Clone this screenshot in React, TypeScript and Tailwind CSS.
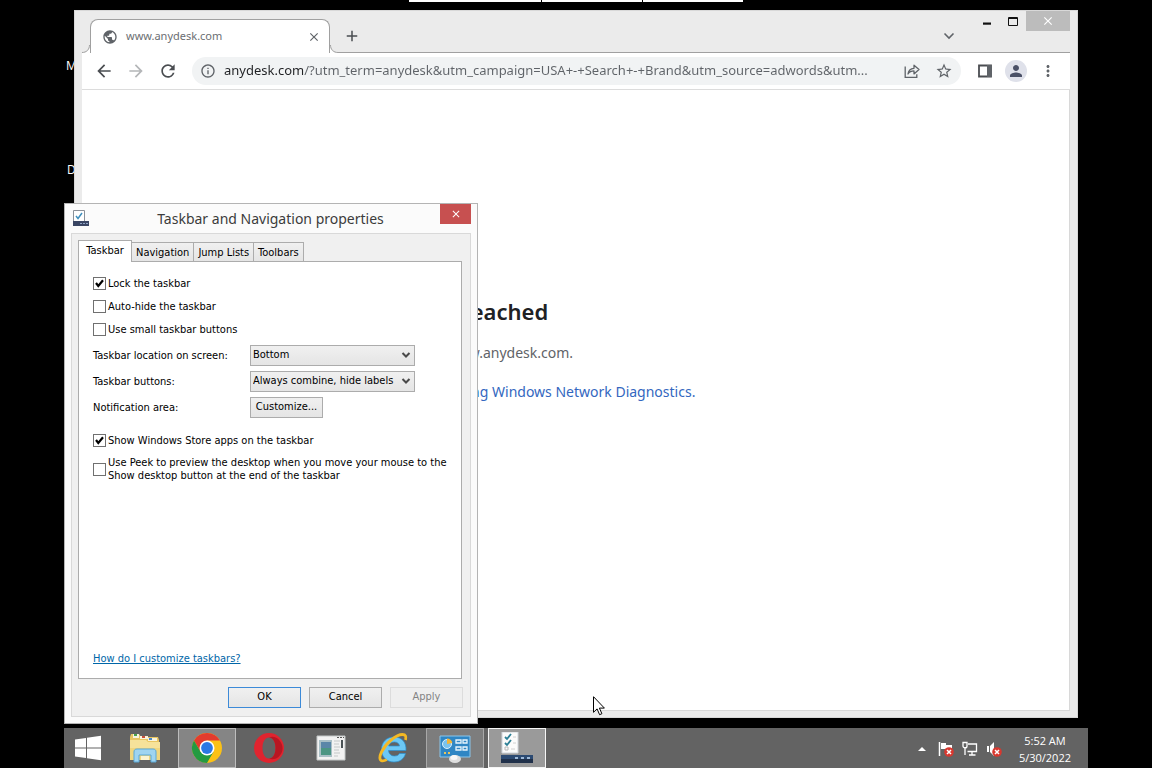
import { useState } from 'react';
import type { ReactNode } from 'react';
import {
  MdAdd,
  MdArrowBack,
  MdArrowForward,
  MdClose,
  MdInfoOutline,
  MdMoreVert,
  MdPerson,
  MdPublic,
  MdRefresh,
  MdStarBorder,
} from 'react-icons/md';

const tabs = ['Taskbar', 'Navigation', 'Jump Lists', 'Toolbars'];

const pageUrl =
  'anydesk.com/?utm_term=anydesk&utm_campaign=USA+-+Search+-+Brand&utm_source=adwords&utm...';

const ShareIcon = () => (
  <svg className="w-4 h-4" viewBox="0 0 16 16" fill="none" stroke="#5f6368" strokeWidth="1.3">
    <path d="M1.200 3.500v10.800h11.600v-3" />
    <path d="M4 11c.4-3.600 2.400-5.500 6-5.700V2.200L15 6.600l-5 4.300V7.900C7.400 7.900 5.400 8.800 4 11z" strokeLinejoin="round" />
  </svg>
);

const SidePanelIcon = () => (
  <svg className="w-4 h-4" viewBox="0 0 16 16">
    <path d="M2 2.500h12v11H2z" fill="none" stroke="#4a4d51" strokeWidth="1.800" />
    <path d="M10 2h5v12h-5z" fill="#5f6368" />
  </svg>
);

const SelectArrow = () => (
  <svg className="pointer-events-none absolute right-1 top-1.5 w-2.5 h-2" viewBox="0 0 10 8" fill="none" stroke="#4a4a4a" strokeWidth="2">
    <path d="M1.500 2L5 5.500 8.500 2" />
  </svg>
);

const StartIcon = () => (
  <svg className="w-7 h-7" viewBox="0 0 28 28" fill="#fff">
    <path d="M1 5.500l11-1.600v9.600H1zM13 3.700L27 1.700v11.800H13zM1 14.500h11v9.600L1 22.500zM13 14.500h14v11.800l-14-2z" />
  </svg>
);

const ExplorerIcon = () => (
  <svg className="w-8 h-8" viewBox="0 0 32 32">
    <path d="M1 5l1-3h8l2 3h17l1 3v19H1z" fill="#e9c662" />
    <path d="M4 2h6v4H4z" fill="#f8f4df" />
    <path d="M5 2h3v2H5z" fill="#4ba04b" />
    <path d="M11 4h8v3h-8z" fill="#f8f4df" />
    <path d="M13 4h3v2h-3z" fill="#c8503c" />
    <path d="M19 6h9v3h-9z" fill="#f8f4df" />
    <path d="M20 6h3v2h-3z" fill="#4b87c8" />
    <path d="M1 8h16l2 2h12v18H1z" fill="#f6e29a" />
    <path d="M1 16h30v12H1z" fill="#f0d67e" />
    <path d="M5 30V20c0-2 1-3 3-3h16c2 0 3 1 3 3v10h-5v-7H10v7z" fill="#9fd4f0" stroke="#5aa9d8" />
    <path d="M12 24h8v4h-8z" fill="#fbf3cf" />
  </svg>
);

const ChromeIcon = () => (
  <svg className="w-8 h-8" viewBox="0 0 32 32">
    <circle cx="16" cy="16" r="15" fill="#fbc116" />
    <path d="M3 8.500A15 15 0 0 1 29 8.500H16l-6.500 11.300z" fill="#e33b2e" />
    <path d="M3 8.500A15 15 0 0 0 16 31l6.500-11.200h-13z" fill="#249a41" />
    <circle cx="16" cy="16" r="7.500" fill="#fff" />
    <circle cx="16" cy="16" r="5.900" fill="#2b78e4" />
  </svg>
);

const OperaIcon = () => (
  <svg className="w-8 h-8" viewBox="0 0 32 32" fillRule="evenodd">
    <path d="M16 1a15 15 0 1 0 0 30 15 15 0 0 0 0-30zm0 4.500c4 0 6.500 4.500 6.500 10.500S20 26.500 16 26.500 9.500 22 9.500 16 12 5.500 16 5.500z" fill="#e0242f" />
    <path d="M22.500 16c0-6-2.500-10.500-6.500-10.500 3-1.500 7-1 9.500 1.800C31 13 31 20 25.500 25c-3 2.500-7 2.800-9.500 1.500 4 0 6.500-4.500 6.500-10.500z" fill="#b81622" />
  </svg>
);

const ServerManagerIcon = () => (
  <svg className="w-8 h-8" viewBox="0 0 32 32">
    <path d="M2 4h28v24H2z" fill="#f2f2f2" stroke="#c4c8c8" />
    <path d="M22 5h2v1h-2zM25 5h2v1h-2zM28 5h1v1h-1z" fill="#555" />
    <path d="M4 8h13v17H4z" fill="#a9bfc6" />
    <path d="M6 10h10v13H6z" fill="#4b9583" />
    <path d="M6 10h10v6H6z" fill="#5a86a8" />
    <path d="M19 9h6M19 12h5M19 15h6M19 18h5M19 21h6M19 24h4" stroke="#c4c8c8" />
    <path d="M26 8h2v8h-2z" fill="#4a5255" />
  </svg>
);

const InternetExplorerIcon = () => (
  <svg className="w-8 h-8" viewBox="0 0 32 32">
    <path d="M29 18.500H11.500c.3 3.500 2.600 5.500 6 5.500 2.400 0 4-.8 5-2.500H28.500C27 27 23 30 17 30 9.500 30 4.500 25 4.500 17.500S9.500 5 17 5c8 0 12.500 5.500 12 13.500zM11.700 14h10.800c-.4-2.600-2.300-4-5.200-4-3 0-5 1.400-5.600 4z" fill="#6cc8f5" stroke="#2a8fd0" strokeWidth=".7" />
    <path d="M28.500 8c1-3.500 0-5.500-3-5.500C19 2.500 9 11 4.500 20c-2.300 4.700-2.200 8.300.5 8.800 1.500.3 3-.2 4.800-1.200" fill="none" stroke="#f4b924" strokeWidth="2.800" />
  </svg>
);

const ControlPanelIcon = () => (
  <svg className="w-8 h-8" viewBox="0 0 32 32">
    <path d="M1 4h30v21H1z" fill="#2f86c4" stroke="#8cc6ea" />
    <circle cx="8" cy="12" r="4.500" fill="#79c3ee" stroke="#d9effb" />
    <path d="M8 12V6.500a5.500 5.500 0 0 1 5.300 4.500z" fill="#f1b53a" />
    <path d="M17 8h5v3h-5zM24 8h4v3h-4zM17 15h5v3h-5zM24 15h4v3h-4z" fill="none" stroke="#e6f4fc" strokeWidth="1.300" />
    <path d="M5 20h2v2H5zM9 20h2v2H9z" fill="#e8c45c" />
    <ellipse cx="16" cy="27" rx="6" ry="4" fill="#dedede" />
    <ellipse cx="15" cy="25.500" rx="3.500" ry="2.500" fill="#f7f7f7" />
  </svg>
);

const TaskbarPropsIcon = () => (
  <svg className="w-8 h-8" viewBox="0 0 32 32">
    <path d="M1 0h16v21H1z" fill="#fbfbfb" stroke="#cfd4da" />
    <path d="M4 5l2 2 4-5M4 11l2 2 4-5" fill="none" stroke="#2b7f96" strokeWidth="1.800" />
    <path d="M4 15h3v3H4z" fill="none" stroke="#b8b8b8" />
    <path d="M12 5h3M12 11h3M10 17h4" stroke="#d0d0d0" />
    <path d="M0 23h32v8H0z" fill="#2c4a72" />
    <path d="M0 27h32v4H0z" fill="#20304a" />
    <path d="M14 25h3v2h-3zM20 25h3v2h-3zM26 25h3v2h-3z" fill="#9db9d8" />
  </svg>
);

const DialogIcon = () => (
  <svg className="w-4 h-4" viewBox="0 0 16 16">
    <path d="M.5.5h11v11H.5z" fill="#fff" stroke="#8b9199" />
    <path d="M3 6l2 2.500L9 3" fill="none" stroke="#3f8fbd" strokeWidth="1.500" />
    <path d="M0 11h16v5H0z" fill="#3a4664" />
    <path d="M7 13h2v1H7zM10 13h2v1h-2zM13 13h2v1h-2z" fill="#8ea3c4" />
  </svg>
);

const ErrorBadge = () => (
  <>
    <circle cx="11" cy="11" r="4.800" fill="#d8382f" />
    <path d="M9 9l4 4M13 9l-4 4" stroke="#fff" strokeWidth="1.500" />
  </>
);

const taskButtons: { name: string; icon: ReactNode; state?: string }[] = [
  { name: 'File Explorer', icon: <ExplorerIcon /> },
  { name: 'Google Chrome', icon: <ChromeIcon />, state: 'border-[#bdbdbd] bg-[#858585]' },
  { name: 'Opera', icon: <OperaIcon /> },
  { name: 'Server Manager', icon: <ServerManagerIcon /> },
  { name: 'Internet Explorer', icon: <InternetExplorerIcon /> },
  { name: 'Control Panel', icon: <ControlPanelIcon />, state: 'border-[#a8a8a8] bg-[#7d7d7d]' },
  { name: 'Taskbar properties', icon: <TaskbarPropsIcon />, state: 'border-[#f5f5f5] bg-[#9a9a9a]' },
];

const CheckRow = ({ id, label, initial = false }: { id: string; label: ReactNode; initial?: boolean }) => {
  const [checked, setChecked] = useState(initial);

  return (
    <div className="flex items-center gap-0.5">
      <span className="relative flex h-[13px] w-[13px] shrink-0">
        <input
          id={id}
          type="checkbox"
          checked={checked}
          onChange={(e) => setChecked(e.target.checked)}
          className="h-full w-full appearance-none border border-[#707070] bg-white"
        />
        {checked && (
          <svg className="pointer-events-none absolute inset-0" viewBox="0 0 13 13" fill="none" stroke="#000" strokeWidth="2.200">
            <path d="M3 6l2.300 3L10 3.300" />
          </svg>
        )}
      </span>
      <label htmlFor={id}>{label}</label>
    </div>
  );
};

const SelectRow = ({ id, label, options }: { id: string; label: string; options: string[] }) => (
  <div className="flex items-center">
    <label htmlFor={id} className="w-[157px] pt-0.5">{label}</label>
    <span className="relative">
      <select
        id={id}
        className="block h-[21px] w-[165px] appearance-none border border-[#acacac] bg-linear-to-b from-[#f0f0f0] to-[#e5e5e5] pl-0.5"
      >
        {options.map((option) => (
          <option key={option}>{option}</option>
        ))}
      </select>
      <SelectArrow />
    </span>
  </div>
);

const BrowserWindow = () => (
  <section className="absolute inset-x-[74px] top-2.5 bottom-[50px] flex flex-col border border-[#d8d8d8] bg-[#ebebeb] px-[7px] pb-1.5 font-['Noto_Sans',sans-serif]">
    {/* Tab strip */}
    <div className="flex h-[42px] shrink-0 items-end">
      <svg className="w-2 h-2" viewBox="0 0 8 8">
        <path d="M0 8c5 0 8-3 8-8v8z" fill="#fff" />
        <path d="M0 7.500c4.500 0 7.500-3 7.500-7.500" fill="none" stroke="#a0a0a0" />
      </svg>
      <div className="flex h-[34px] w-60 items-center rounded-t-lg border border-b-0 border-[#a0a0a0] bg-white px-[11px] pr-1.5 text-[11px] text-[#6b6e72]">
        <MdPublic className="w-4 h-4 text-[#5f6368]" />
        <span className="ml-2 flex-1">www.anydesk.com</span>
        <button aria-label="Close tab" className="p-0.5 text-[#5f6368]">
          <MdClose className="w-3.5 h-3.5" />
        </button>
      </div>
      <svg className="w-2 h-2" viewBox="0 0 8 8">
        <path d="M8 8C3 8 0 5 0 0v8z" fill="#fff" />
        <path d="M8 7.500C3.500 7.500.5 4.500.5 0" fill="none" stroke="#a0a0a0" />
      </svg>
      <div className="flex h-full flex-1 justify-between border-b border-[#a0a0a0]">
        <button aria-label="New tab" className="self-end px-[5px] py-[7px] text-[#4a4d51]">
          <MdAdd className="w-[18px] h-[18px]" />
        </button>
        <div className="flex items-start">
          <button aria-label="Search tabs" className="mt-[19px] mr-[17px] p-0.5">
            <svg className="w-3 h-2" viewBox="0 0 12 8" fill="none" stroke="#5f6368" strokeWidth="1.600">
              <path d="M1.500 1.500L6 6l4.500-4.500" />
            </svg>
          </button>
          <button aria-label="Minimize" className="h-5 px-2">
            <svg className="w-2.5 h-2.5" viewBox="0 0 10 10">
              <path d="M1 6.500h8v2.200H1z" fill="#111" />
            </svg>
          </button>
          <button aria-label="Maximize" className="h-5 px-2">
            <svg className="w-2.5 h-2.5" viewBox="0 0 10 10" fill="none" stroke="#111">
              <path d="M.5 1.500h9v8h-9zM.5 2.500h9" />
            </svg>
          </button>
          <button aria-label="Close" className="flex h-5 w-11 items-center justify-center bg-[#bcbcbc] text-white">
            <MdClose className="w-3.5 h-3.5" />
          </button>
        </div>
      </div>
    </div>

    {/* Toolbar */}
    <div className="flex h-[37px] shrink-0 items-center border-b border-[#dcdcdc] bg-white pr-[13px] pl-3 text-[#5f6368]">
      <div className="flex w-[98px] items-center gap-3">
        <button aria-label="Back"><MdArrowBack className="w-5 h-5 text-[#4a4d51]" /></button>
        <button aria-label="Forward"><MdArrowForward className="w-5 h-5 text-[#b4b6b8]" /></button>
        <button aria-label="Reload"><MdRefresh className="w-5 h-5 text-[#4a4d51]" /></button>
      </div>
      <div className="flex h-7 flex-1 items-center rounded-full bg-[#f1f3f4] px-2">
        <MdInfoOutline className="w-4 h-4 shrink-0" />
        <input
          aria-label="Address"
          defaultValue={pageUrl}
          className="ml-2 min-w-0 flex-1 bg-[linear-gradient(to_right,#202124_79px,#5f6368_79px)] bg-clip-text text-[13px] text-transparent outline-none"
        />
        <button aria-label="Share" className="ml-2"><ShareIcon /></button>
        <button aria-label="Bookmark" className="ml-[15px]"><MdStarBorder className="w-[18px] h-[18px]" /></button>
      </div>
      <div className="ml-4 flex items-center gap-2.5">
        <button aria-label="Side panel"><SidePanelIcon /></button>
        <button aria-label="Profile" className="ml-0.5 flex h-[22px] w-[22px] items-center justify-center rounded-full bg-[#dfe1ea]">
          <MdPerson className="w-[18px] h-[18px] text-[#4a5066]" />
        </button>
        <button aria-label="Menu" className="ml-0.5"><MdMoreVert className="w-[18px] h-[18px]" /></button>
      </div>
    </div>

    {/* Error page */}
    <main className="flex-1 border-b border-r border-[#d8d8d8] bg-white pt-[203px]">
      <div className="mx-auto w-[594px] text-[#5f6368]">
        <h1 className="text-[22px] leading-9 font-semibold text-[#202124]">This site can’t be reached</h1>
        <p className="mt-3.5 text-sm leading-5">Check if there is a typo in www.anydesk.com.</p>
        <p className="mt-[19px] text-sm leading-5">
          If spelling is correct, <a href="#diagnostics" className="text-[#3367c0]">try running Windows Network Diagnostics.</a>
        </p>
      </div>
    </main>
  </section>
);

const PropertiesDialog = () => (
  <section className="absolute left-16 top-[203px] w-[414px] border border-[#b4b4b4] bg-[#fbfbfb] px-1.5 pb-1.5 font-['DejaVu_Sans_Condensed','DejaVu_Sans',sans-serif] text-[11px] text-black">
    <header className="flex h-[29px] items-start justify-between">
      <span className="mt-1.5 ml-0.5 w-7"><DialogIcon /></span>
      <h2 className="pt-[5px] font-['Noto_Sans',sans-serif] text-sm leading-5 text-[#3c3c3c]">Taskbar and Navigation properties</h2>
      <button aria-label="Close" className="flex h-5 w-[31px] items-center justify-center bg-[#c75050] text-white">
        <MdClose className="w-3 h-3" />
      </button>
    </header>

    <div className="border border-[#d9d9d9] bg-[#f0f0f0] pt-1.5 pr-[7px] pb-2 pl-1.5">
      {/* Tabs */}
      <div role="tablist" className="flex items-end">
        {tabs.map((tab) => (
          <button
            key={tab}
            role="tab"
            aria-selected={tab === 'Taskbar'}
            className={
              tab === 'Taskbar'
                ? 'relative -mb-px h-[22px] w-[54px] border border-b-0 border-[#acacac] bg-white'
                : 'h-[19px] border border-b-0 border-l-0 border-[#acacac] bg-linear-to-b from-[#f0f0f0] to-[#e5e5e5] px-1 pt-0.5'
            }
          >
            {tab}
          </button>
        ))}
      </div>

      <div role="tabpanel" className="flex h-[418px] w-96 flex-col border border-[#acacac] bg-white px-3.5 pt-[15px] pb-[13px]">
        <div className="flex flex-col gap-2.5 leading-[13px]">
          <CheckRow id="lock" label="Lock the taskbar" initial />
          <CheckRow id="autohide" label="Auto-hide the taskbar" />
          <CheckRow id="small" label="Use small taskbar buttons" />
        </div>
        <div className="mt-[9px] flex flex-col gap-[5px]">
          <SelectRow id="location" label="Taskbar location on screen:" options={['Bottom', 'Left', 'Right', 'Top']} />
          <SelectRow id="buttons" label="Taskbar buttons:" options={['Always combine, hide labels', 'Never combine']} />
          <div className="flex items-center">
            <label htmlFor="customize" className="w-[157px] pt-0.5">Notification area:</label>
            <button id="customize" className="h-[21px] w-[73px] border border-[#acacac] bg-linear-to-b from-[#f0f0f0] to-[#e5e5e5]">
              Customize...
            </button>
          </div>
        </div>
        <div className="mt-4 flex flex-col gap-[9px] leading-[13px]">
          <CheckRow id="store" label="Show Windows Store apps on the taskbar" initial />
          <CheckRow
            id="peek"
            label={
              <>
                Use Peek to preview the desktop when you move your mouse to the
                <br />
                Show desktop button at the end of the taskbar
              </>
            }
          />
        </div>
        <a href="#help" className="mt-auto self-start leading-[13px] text-[#0066a8] underline">How do I customize taskbars?</a>
      </div>

      <div className="mt-2 flex justify-end gap-2">
        <button className="h-[21px] w-[73px] border border-[#3c8ad8] bg-linear-to-b from-[#f0f0f0] to-[#e5e5e5]">OK</button>
        <button className="h-[21px] w-[73px] border border-[#acacac] bg-linear-to-b from-[#f0f0f0] to-[#e5e5e5]">Cancel</button>
        <button disabled className="h-[21px] w-[73px] border border-[#dcdcdc] bg-[#efefef] text-[#838383]">Apply</button>
      </div>
    </div>
  </section>
);

const Taskbar = () => (
  <footer className="absolute inset-x-16 bottom-0 flex h-10 justify-between bg-[#636363] font-['Open_Sans',sans-serif]">
    <div className="flex gap-1">
      <button aria-label="Start" className="flex w-12 items-center justify-center"><StartIcon /></button>
      {taskButtons.map((item) => (
        <button
          key={item.name}
          aria-label={item.name}
          className={`flex w-[58px] items-center justify-center border ${item.state ?? 'border-transparent'}`}
        >
          {item.icon}
        </button>
      ))}
    </div>
    <div className="flex items-center pr-[17px] pt-0.5 text-white">
      <button aria-label="Show hidden icons" className="mr-3">
        <svg className="w-2 h-2" viewBox="0 0 8 8" fill="#fff"><path d="M0 6l4-4 4 4z" /></svg>
      </button>
      <button aria-label="Action Center" className="mr-2">
        <svg className="w-4 h-4" viewBox="0 0 16 16">
          <path d="M1.500 1v14" stroke="#fff" strokeWidth="1.500" />
          <path d="M3 2h5v2h6v6H8V8H3z" fill="#fff" />
          <ErrorBadge />
        </svg>
      </button>
      <button aria-label="Network" className="mr-2">
        <svg className="w-4 h-4" viewBox="0 0 16 16" fill="none" stroke="#fff" strokeWidth="1.300">
          <path d="M6 3h8.500v7.500H5.500M10 10.500V14M7 14h6.500M3 6v8M1 1.500h4V5a2 2 0 0 1-4 0z" />
        </svg>
      </button>
      <button aria-label="Volume" className="mr-[17px]">
        <svg className="w-4 h-4" viewBox="0 0 16 16">
          <path d="M1 5h2v6H1zM4 5l4-4v14l-4-4z" fill="#fff" />
          <ErrorBadge />
        </svg>
      </button>
      <time dateTime="2022-05-30T05:52" className="text-center text-[11px] leading-[17px]">
        5:52 AM
        <br />
        5/30/2022
      </time>
    </div>
  </footer>
);

const App = () => (
  <div className="relative min-h-screen overflow-hidden bg-black">
    {/* Remote session toolbar, tucked above the screen */}
    <div className="mx-auto flex h-0.5 w-[334px] gap-px">
      <div className="w-[132px] bg-white" />
      <div className="w-[100px] bg-white" />
      <div className="flex-1 bg-white" />
    </div>

    {/* Desktop icon labels */}
    <span className="absolute left-[66px] top-[58px] font-['Open_Sans',sans-serif] text-xs leading-4 text-white">M</span>
    <span className="absolute left-[67px] top-[162px] font-['Open_Sans',sans-serif] text-xs leading-4 text-white">D</span>

    <BrowserWindow />
    <PropertiesDialog />
    <Taskbar />

    {/* Mouse pointer */}
    <svg className="absolute left-[593px] top-[696px] h-5 w-3" viewBox="0 0 12 20">
      <path d="M.5.700v15.600l3.600-3.400 2.500 5.800 2.300-1-2.500-5.600h5z" fill="#fff" stroke="#000" />
    </svg>
  </div>
);

export default App;
